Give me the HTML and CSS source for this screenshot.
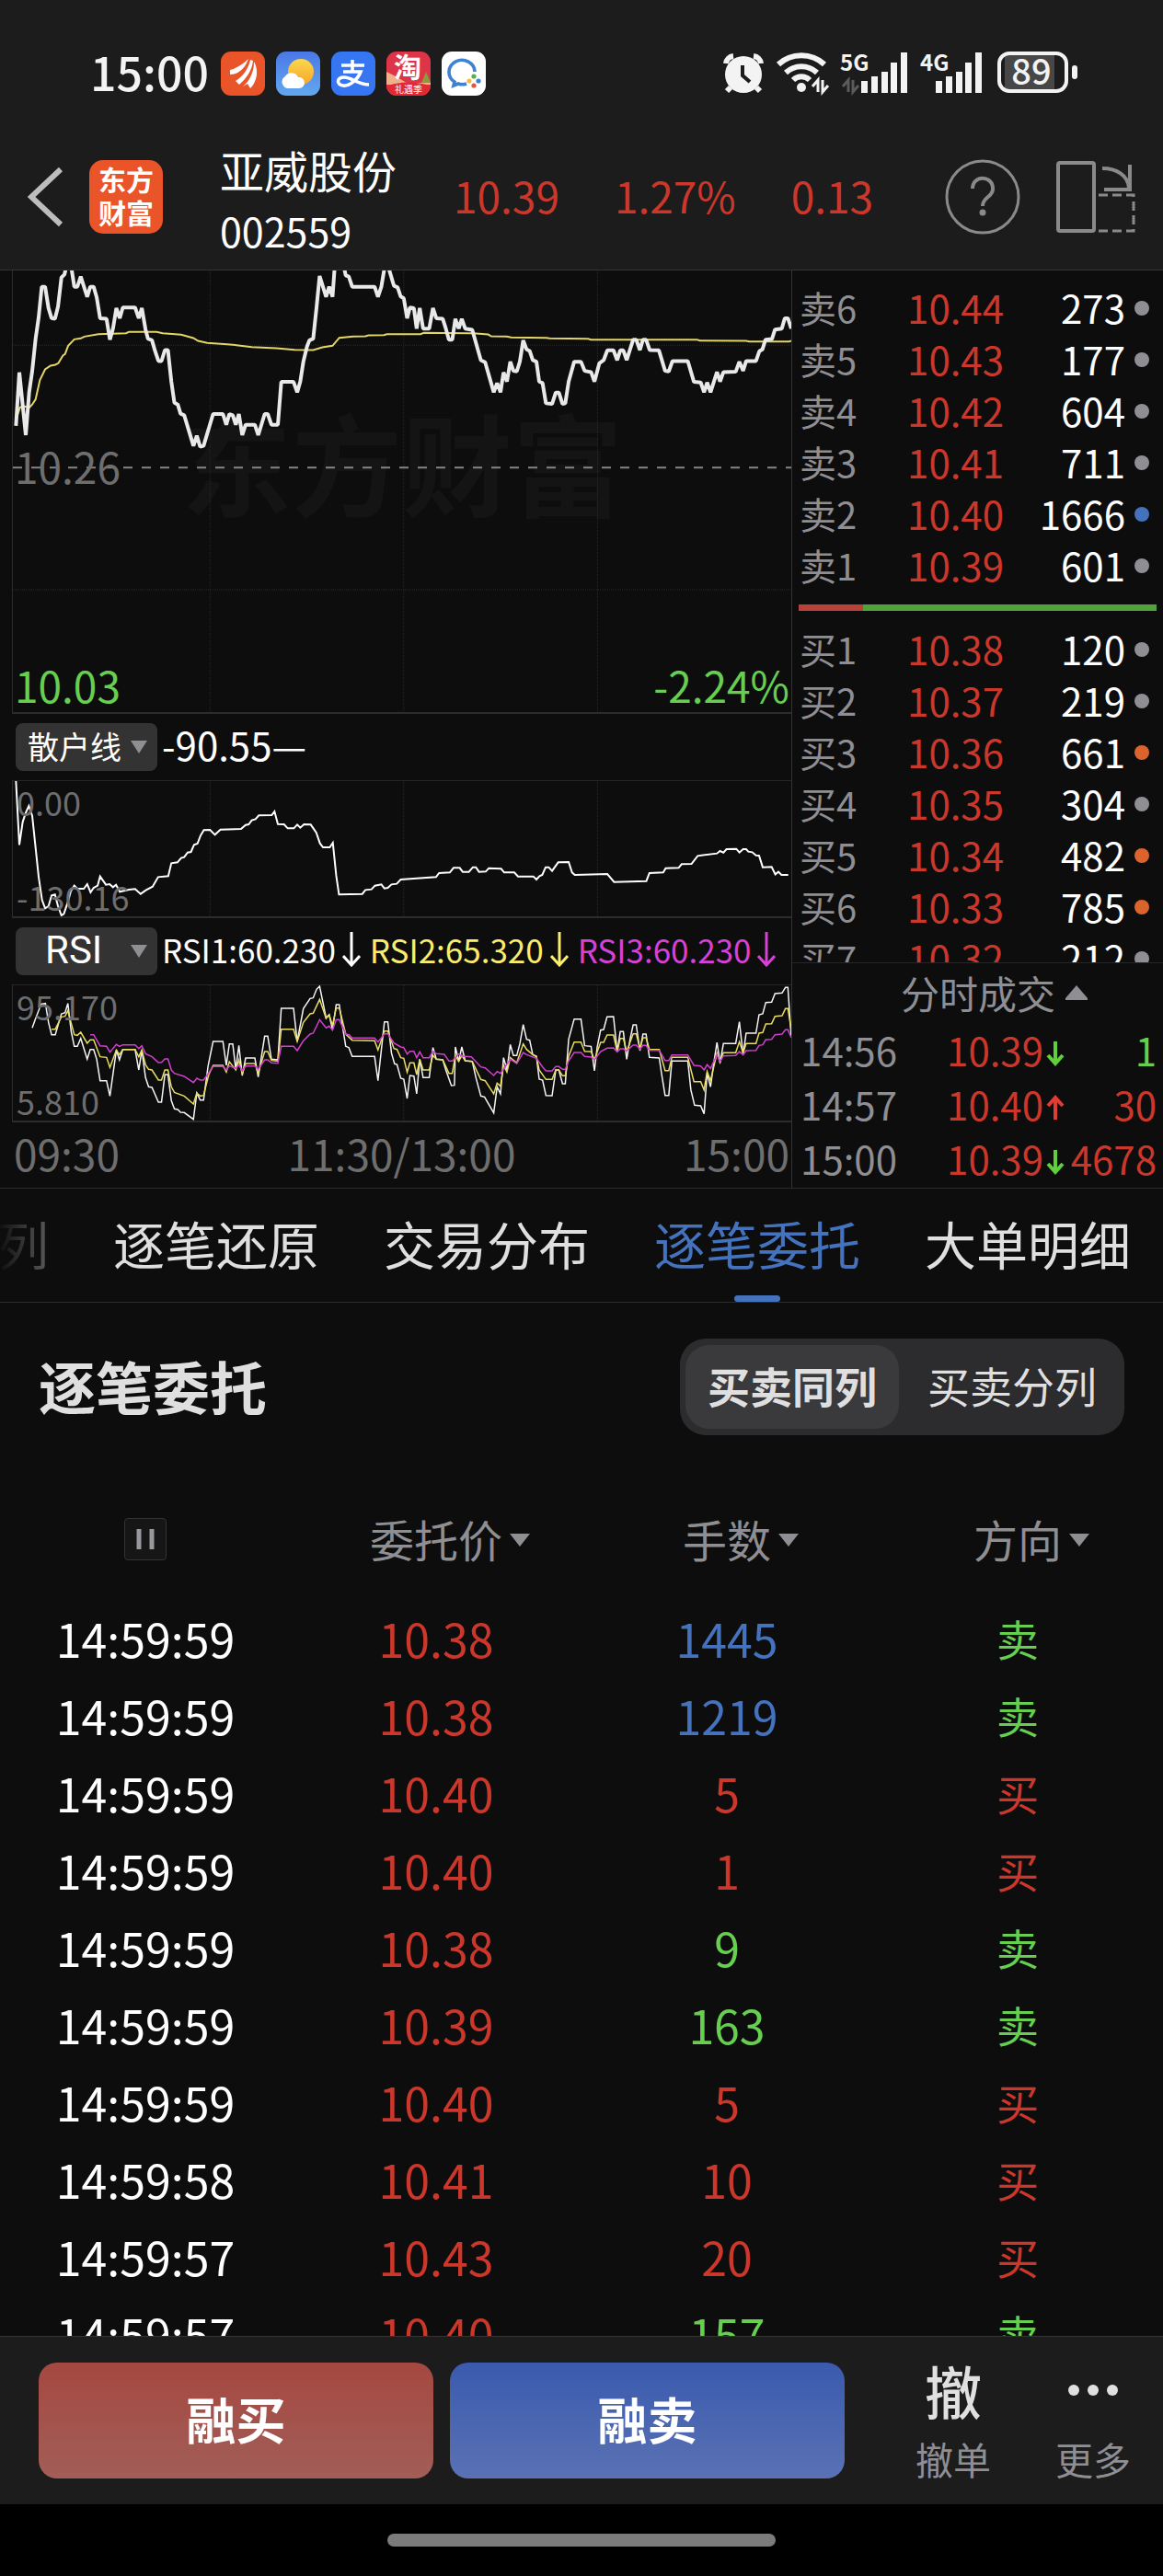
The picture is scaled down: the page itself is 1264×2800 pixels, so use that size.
FILE: index.html
```html
<!DOCTYPE html>
<html lang="zh-CN">
  <head>
    <meta charset="UTF-8" />
    <meta name="viewport" content="width=device-width, initial-scale=1.0" />
    <title>亚威股份 002559</title>
    <link rel="stylesheet" href="styles.css">
  </head>
  <body>
    <div class="app">
      <header class="top">
        <div class="status">
          <span class="clock">15:00</span>
          <div class="status-apps">
            <svg width="48" height="48" viewBox="0 0 48 48">
              <rect width="48" height="48" rx="11" fill="#ea5429"/>
              <path d="M10 25V20C18 18 25 13 30 8C27 17 20 25 10 25ZM16 32C24 27 30 19 32 9L35 10C34 21 27 30 20 36ZM24 38C32 31 36 22 36 11C41 19 40 32 32 40L29 35Z" fill="#fff"/>
            </svg>
            <svg width="48" height="48" viewBox="0 0 48 48">
              <defs>
                <linearGradient id="sky" x2="0" y2="1"><stop stop-color="#4a78e8"/><stop offset="1" stop-color="#62a8ee"/></linearGradient>
                <linearGradient id="sun" x2="0" y2="1"><stop stop-color="#fbd84a"/><stop offset="1" stop-color="#f6a52c"/></linearGradient>
              </defs>
              <rect width="48" height="48" rx="11" fill="url(#sky)"/>
              <circle cx="27" cy="22" r="14" fill="url(#sun)"/>
              <path d="M14 40a7 7 0 0 1-4-13a8 8 0 0 1 14 1a6 6 0 0 1 7 6a6 6 0 0 1-6 6Z" fill="#fff"/>
            </svg>
            <svg width="48" height="48" viewBox="0 0 48 48">
              <rect width="48" height="48" rx="11" fill="#3676f2"/>
              <path d="M11 15H36M23 9V22M13 22H32C29 30 20 38 13 37C5 36 6 28 14 28C22 28 30 36 41 36" fill="none" stroke="#fff" stroke-width="3.6"/>
            </svg>
            <svg width="48" height="48" viewBox="0 0 48 48">
              <defs><clipPath id="tb"><rect width="48" height="48" rx="11"/></clipPath></defs>
              <g clip-path="url(#tb)">
                <rect width="48" height="48" fill="#dd3547"/>
                <path d="M0 22L8 26L22 34H48V36H0Z" fill="#efb08c"/>
                <path d="M38 34L43 22L48 34Z" fill="#8f9a3c"/>
                <path d="M0 38C12 32 36 32 48 38V48H0Z" fill="#e22a35"/>
              </g>
              <text class="tb-main" x="23" y="28" text-anchor="middle">淘</text>
              <text class="tb-sub" x="24" y="45" text-anchor="middle">礼遇季</text>
            </svg>
            <svg width="48" height="48" viewBox="0 0 48 48">
              <rect width="48" height="48" rx="11" fill="#fff"/>
              <path d="M36 22A14 13 0 1 0 14 33L13 37L18 35C21 36 24 36 27 35" fill="none" stroke="#3f82d2" stroke-width="3.6"/>
              <circle cx="35" cy="27" r="2.6" fill="#58b347"/><circle cx="40" cy="32" r="2.6" fill="#3f82d2"/>
              <circle cx="35" cy="37" r="2.6" fill="#e2583a"/><circle cx="30" cy="32" r="2.6" fill="#f2bd3f"/>
            </svg>
          </div>
          <div class="status-sys">
            <svg width="46" height="48" viewBox="0 0 46 48">
              <circle cx="23" cy="25" r="20" fill="#f3f3f3"/>
              <path d="M4 13A9 9 0 0 1 12 5M42 13A9 9 0 0 0 34 5M9 39L5 43M37 39L41 43" stroke="#f3f3f3" stroke-width="6" fill="none"/>
              <path d="M22 15V26L30 33" stroke="#1c1c1c" stroke-width="4" fill="none"/>
            </svg>
            <svg width="60" height="48" viewBox="0 0 60 48">
              <path d="M4 14C18 1 40 1 54 14M12 23C22 14 36 14 46 23M20 31C25 26 33 26 38 31" fill="none" stroke="#f3f3f3" stroke-width="6"/>
              <circle cx="29" cy="39" r="5" fill="#f3f3f3"/>
              <path d="M41 38L47 31V44M58 37L52 44V31" fill="none" stroke="#f3f3f3" stroke-width="3"/>
            </svg>
            <svg width="76" height="48" viewBox="0 0 76 48">
              <text class="net" x="0" y="21">5G</text>
              <path d="M3 38L9 31V44M20 37L14 44V31" fill="none" stroke="#5a5a5a" stroke-width="3"/>
              <path d="M26.500 32V45M37.500 27V45M48.500 22V45M58.500 12V45M69.500 1V45" stroke="#f3f3f3" stroke-width="7"/>
            </svg>
            <svg width="71" height="48" viewBox="0 0 71 48">
              <text class="net" x="0" y="21">4G</text>
              <path d="M20.500 32V45M31.500 27V45M42.500 22V45M52.500 12V45M63.500 1V45" stroke="#f3f3f3" stroke-width="7"/>
            </svg>
            <svg width="90" height="48" viewBox="0 0 90 48">
              <path d="M10 3H64V42H10Z" fill="#474747"/>
              <rect x="4" y="2" width="73" height="41" rx="11" fill="none" stroke="#f3f3f3" stroke-width="4"/>
              <rect x="83" y="15" width="6" height="15" rx="3" fill="#f3f3f3"/>
              <text class="batt" x="39" y="36" text-anchor="middle">89</text>
            </svg>
          </div>
        </div>
        <div class="titlebar">
          <button class="icon-btn back" aria-label="返回">
            <svg width="40" height="68" viewBox="0 0 40 68"><path d="M36 4L4 34L36 64" fill="none" stroke="#bdbdbd" stroke-width="6"/></svg>
          </button>
          <div class="logo"><span>东方</span><span>财富</span></div>
          <div class="stock">
            <h1>亚威股份</h1>
            <p>002559</p>
          </div>
          <div class="quote">
            <span>10.39</span>
            <span>1.27%</span>
            <span>0.13</span>
          </div>
          <button class="icon-btn" aria-label="帮助">
            <svg width="84" height="84" viewBox="0 0 84 84" fill="none" stroke="#8a8a8a">
              <circle cx="42" cy="42" r="39" stroke-width="3"/>
              <path d="M31 33C31 18 54 18 53 34C52 43 42 42 42 52" stroke-width="4"/>
              <circle cx="42" cy="59" r="3.500" fill="#8a8a8a" stroke="none"/>
            </svg>
          </button>
          <button class="icon-btn rotate" aria-label="横屏">
            <svg width="86" height="80" viewBox="0 0 86 80" fill="none" stroke="#8a8a8a" stroke-width="4">
              <rect x="2" y="3" width="39" height="74" rx="2"/>
              <path d="M50 9C66 9 78 17 79 30M80 5V32M52 32H82"/>
              <path d="M46 38H84V77H46" stroke-width="3" stroke-dasharray="10 5"/>
            </svg>
          </button>
        </div>
      </header>

      <main class="market">
        <section class="charts">
          <div class="chart chart-price">
            <span class="watermark">东方财富</span>
            <svg viewBox="42 42 2535 1443" preserveAspectRatio="none">
              <path class="grid" d="M684 42V1485M1315 42V1485M1946 42V1485M42 286H2577M42 1085H2577"/>
              <path class="mid" d="M42 686H2577"/>
              <polyline class="avg" points="52,530 65,490 75,485 95,490 105,480 116,463 130,400 147,365 165,353 180,350 190,345 205,320 212,315 222,288 242,267 263,264 275,258 320,250 410,247 420,243 510,243 530,247 590,252 630,263 645,272 675,279 740,283 770,286 820,292 900,296 960,301 1020,302 1050,293 1083,288 1105,262 1150,258 1190,257 1200,254 1250,253 1260,250 1370,250 1380,246 1540,247 1590,251 1600,257 1650,258 1665,261 1780,262 1790,264 1915,265 1925,268 2270,268 2280,271 2430,272 2440,274 2570,274 2577,272"/>
              <polyline class="price" points="52,550 63,375 84,580 95,440 105,370 116,265 126,195 136,95 147,95 158,165 168,198 179,200 189,160 200,65 210,55 216,30 232,30 242,95 252,95 263,62 284,128 294,95 305,95 315,130 326,198 347,200 358,268 368,232 379,165 390,198 400,163 440,163 452,198 462,165 474,235 482,265 495,270 505,305 516,338 526,338 537,302 547,302 558,405 568,474 579,480 588,510 600,515 630,615 641,582 652,618 663,615 694,511 726,511 737,546 747,511 758,515 768,546 778,511 789,580 800,546 830,546 841,580 862,511 872,511 884,546 905,546 916,406 956,406 968,440 978,405 988,340 1000,290 1008,270 1020,265 1031,162 1041,60 1062,128 1072,95 1083,128 1090,30 1120,30 1126,58 1136,62 1147,95 1220,95 1231,128 1242,95 1252,35 1266,35 1283,92 1295,97 1305,127 1315,133 1326,198 1335,163 1348,165 1357,232 1367,165 1378,232 1398,232 1410,165 1421,198 1442,200 1452,232 1462,268 1473,268 1483,200 1494,232 1504,200 1515,232 1538,236 1566,335 1580,342 1608,440 1619,410 1630,440 1640,375 1651,405 1662,340 1672,370 1683,372 1693,340 1704,270 1715,300 1725,305 1735,335 1747,340 1756,405 1767,410 1778,476 1798,478 1810,441 1820,441 1832,478 1841,476 1852,405 1870,340 1892,340 1904,370 1925,374 1936,405 1952,345 1966,335 1978,303 1998,303 2010,335 2020,303 2030,303 2041,335 2062,268 2072,268 2084,302 2094,268 2104,268 2116,302 2146,303 2166,370 2178,372 2190,338 2240,338 2260,406 2282,408 2293,440 2303,408 2314,440 2335,374 2345,405 2356,374 2396,373 2408,340 2420,370 2430,338 2462,338 2473,306 2483,300 2493,268 2514,266 2524,235 2546,232 2556,198 2566,198 2577,232"/>
            </svg>
            <span class="tag tag-mid">10.26</span>
            <span class="tag tag-low">10.03</span>
            <span class="tag tag-pct">-2.24%</span>
          </div>

          <div class="ind-bar">
            <div class="picker">
              <select aria-label="副图指标一"><option>散户线</option></select>
              <svg width="18" height="14" viewBox="0 0 18 14"><path d="M0 0H18L9 14Z" fill="#8e8e93"/></svg>
            </div>
            <span class="ind-value">-90.55—</span>
          </div>
          <div class="chart chart-sub">
            <span class="tag-s tag-top">0.00</span>
            <span class="tag-s tag-bottom">-130.16</span>
            <svg viewBox="42 232 2535 441" preserveAspectRatio="none">
              <path class="grid" d="M684 232V673M1315 232V673M1946 232V673"/>
              <polyline class="retail" points="52,232 63,440 74,365 84,335 94,313 105,345 126,545 137,620 147,647 158,640 168,605 179,602 189,640 200,670 208,665 220,630 231,590 242,573 252,583 273,583 284,568 295,595 305,580 318,573 326,543 345,570 357,568 368,578 378,570 390,593 420,586 440,584 458,600 475,588 497,576 515,545 548,542 558,500 578,497 590,483 600,480 611,465 622,463 632,440 643,436 653,410 664,392 684,391 700,407 718,390 785,388 800,375 810,373 820,360 832,356 843,344 885,343 894,331 905,372 925,373 937,386 957,386 968,374 978,384 990,373 1012,374 1030,400 1042,435 1052,448 1074,448 1084,433 1095,540 1104,602 1180,600 1190,587 1210,585 1221,573 1242,569 1252,582 1263,580 1275,569 1292,567 1305,553 1420,545 1430,532 1465,530 1477,515 1497,515 1507,528 1527,528 1540,513 1550,513 1560,528 1582,527 1592,516 1632,518 1642,530 1675,530 1687,543 1737,543 1747,553 1757,542 1766,538 1777,513 1787,513 1798,525 1818,497 1852,496 1863,530 1872,538 1978,535 2000,561 2105,558 2115,532 2160,530 2168,516 2210,515 2220,503 2252,502 2272,476 2335,468 2345,460 2356,465 2366,454 2398,453 2408,465 2420,454 2430,454 2437,462 2450,464 2462,474 2472,475 2484,513 2513,512 2525,536 2535,528 2545,538 2567,538"/>
            </svg>
          </div>

          <div class="ind-bar">
            <div class="picker">
              <select class="wide" aria-label="副图指标二"><option>RSI</option></select>
              <svg width="18" height="14" viewBox="0 0 18 14"><path d="M0 0H18L9 14Z" fill="#8e8e93"/></svg>
            </div>
            <div class="rsi">
              <span class="rsi1">RSI1:60.230 <svg width="20" height="38" viewBox="0 0 20 38"><path d="M10 0V36M1 26L10 36L19 26"/></svg></span>
              <span class="rsi2">RSI2:65.320 <svg width="20" height="38" viewBox="0 0 20 38"><path d="M10 0V36M1 26L10 36L19 26"/></svg></span>
              <span class="rsi3">RSI3:60.230 <svg width="20" height="38" viewBox="0 0 20 38"><path d="M10 0V36M1 26L10 36L19 26"/></svg></span>
            </div>
          </div>
          <div class="chart chart-sub">
            <span class="tag-s tag-top">95.170</span>
            <span class="tag-s tag-bottom">5.810</span>
            <svg viewBox="42 889 2535 441" preserveAspectRatio="none">
              <path class="grid" d="M684 889V1330M1315 889V1330M1946 889V1330"/>
              <polyline class="line1" points="105,1028 115,1000 134,950 148,948 158,1010 168,1050 180,1050 200,982 212,978 221,948 232,1040 242,1088 252,1088 263,1062 284,1130 294,1098 305,1098 315,1130 326,1200 347,1200 358,1250 379,1100 389,1132 400,1098 440,1098 452,1165 462,1100 474,1190 484,1220 495,1222 516,1270 526,1270 537,1180 547,1180 558,1265 568,1292 579,1294 588,1303 600,1304 630,1326 641,1240 652,1263 663,1263 678,1150 694,1072 726,1072 737,1150 747,1080 758,1080 768,1163 778,1085 789,1183 800,1126 830,1126 841,1188 862,1055 872,1055 884,1130 905,1132 916,964 956,964 968,1072 988,965 1010,932 1020,930 1031,902 1041,892 1062,995 1072,985 1083,1033 1095,952 1105,952 1115,1020 1126,1088 1136,1092 1147,1121 1220,1121 1231,1200 1252,1008 1263,1008 1275,1110 1285,1145 1293,1147 1305,1192 1315,1195 1326,1258 1335,1183 1348,1185 1357,1243 1367,1130 1378,1190 1398,1190 1410,1092 1421,1130 1442,1132 1452,1165 1470,1216 1480,1215 1483,1090 1494,1137 1504,1090 1515,1135 1538,1137 1550,1190 1566,1250 1578,1253 1608,1305 1619,1220 1630,1243 1640,1125 1651,1165 1662,1082 1672,1118 1683,1118 1693,1080 1704,1017 1715,1065 1725,1068 1735,1115 1747,1120 1756,1195 1767,1198 1778,1248 1798,1249 1810,1165 1820,1165 1832,1210 1841,1210 1852,1065 1870,999 1892,999 1904,1086 1925,1088 1936,1168 1945,1090 1956,1035 1966,1033 1977,992 1998,991 2010,1105 2020,1040 2030,1040 2041,1130 2052,1065 2062,1018 2072,1018 2084,1102 2094,1048 2104,1048 2115,1124 2147,1126 2155,1180 2166,1248 2178,1248 2188,1136 2240,1136 2250,1230 2262,1280 2282,1282 2293,1308 2303,1175 2314,1220 2325,1140 2335,1075 2345,1142 2356,1079 2396,1079 2408,1008 2420,1115 2430,1045 2462,1045 2472,985 2484,982 2494,945 2513,944 2524,916 2547,914 2558,896 2566,896 2577,1060"/>
              <polyline class="line2" points="168,1032 180,1032 200,992 212,990 221,972 242,1050 252,1052 263,1042 284,1078 294,1067 305,1067 326,1122 347,1124 358,1157 379,1100 389,1115 400,1098 440,1098 452,1122 462,1100 474,1148 484,1163 495,1165 516,1198 526,1198 537,1165 547,1165 558,1220 568,1238 600,1250 630,1276 641,1240 652,1250 663,1248 680,1180 694,1150 726,1150 737,1172 747,1138 768,1165 778,1132 789,1178 800,1144 830,1144 841,1175 862,1105 872,1105 884,1134 905,1136 916,1032 956,1032 968,1072 988,1010 1010,982 1020,980 1041,935 1062,997 1072,985 1083,1020 1095,963 1105,963 1126,1048 1147,1068 1220,1070 1231,1100 1252,1038 1263,1038 1283,1095 1293,1098 1305,1125 1315,1127 1326,1172 1335,1142 1348,1142 1357,1180 1367,1130 1378,1165 1398,1165 1410,1118 1421,1130 1442,1132 1462,1176 1473,1176 1483,1118 1494,1137 1504,1118 1515,1135 1538,1137 1566,1196 1580,1200 1608,1243 1619,1208 1630,1218 1640,1150 1651,1172 1662,1125 1683,1142 1704,1080 1715,1098 1735,1115 1747,1122 1756,1165 1778,1196 1798,1196 1810,1165 1820,1165 1832,1184 1841,1184 1852,1120 1870,1074 1892,1074 1904,1104 1925,1105 1936,1132 1956,1075 1966,1075 1977,1051 1998,1051 2010,1105 2020,1062 2030,1062 2041,1105 2062,1047 2072,1047 2084,1095 2094,1060 2104,1060 2115,1098 2147,1098 2166,1167 2178,1167 2188,1124 2240,1124 2260,1203 2282,1203 2293,1230 2303,1170 2314,1200 2335,1110 2345,1140 2356,1109 2396,1109 2408,1073 2420,1110 2430,1079 2462,1079 2472,1045 2484,1043 2494,1015 2513,1014 2524,990 2547,988 2558,965 2566,965 2577,1035"/>
              <polyline class="line3" points="294,1050 305,1050 326,1086 347,1088 358,1107 379,1082 389,1088 400,1083 440,1083 452,1095 462,1086 474,1112 495,1122 516,1141 526,1140 537,1129 547,1129 558,1165 568,1176 600,1186 630,1206 641,1192 652,1198 663,1198 694,1154 726,1154 737,1165 747,1152 768,1160 778,1148 789,1168 800,1152 830,1152 841,1162 862,1132 872,1132 884,1142 905,1143 916,1088 956,1088 968,1102 988,1070 1010,1048 1020,1045 1041,1001 1062,1028 1072,1022 1083,1035 1095,1001 1105,1001 1126,1048 1137,1050 1147,1061 1220,1061 1231,1074 1252,1047 1263,1047 1283,1077 1305,1090 1315,1092 1326,1113 1335,1104 1348,1104 1357,1125 1367,1106 1378,1125 1398,1125 1410,1104 1421,1112 1447,1114 1462,1136 1473,1136 1494,1113 1504,1120 1535,1122 1566,1155 1580,1158 1608,1183 1619,1170 1630,1176 1662,1130 1683,1144 1704,1108 1715,1115 1747,1127 1767,1155 1778,1168 1798,1168 1810,1154 1820,1154 1832,1163 1841,1163 1852,1135 1870,1108 1892,1108 1904,1121 1925,1123 1936,1132 1956,1105 1977,1094 1998,1093 2010,1106 2020,1096 2030,1096 2041,1103 2062,1084 2072,1084 2084,1097 2094,1085 2104,1085 2115,1101 2147,1101 2166,1134 2178,1134 2188,1116 2240,1116 2260,1150 2282,1152 2293,1165 2303,1148 2314,1160 2335,1115 2345,1137 2356,1119 2396,1118 2408,1105 2420,1116 2430,1102 2462,1101 2472,1085 2484,1083 2494,1066 2513,1065 2524,1050 2547,1048 2558,1034 2566,1034 2577,1060"/>
            </svg>
          </div>
          <div class="times">
            <span>09:30</span>
            <span>11:30/13:00</span>
            <span>15:00</span>
          </div>
        </section>

        <aside class="side">
          <div class="book">
            <table class="levels">
              <tr><th>卖6</th><td>10.44</td><td>273</td><td><i class="dot"></i></td></tr>
              <tr><th>卖5</th><td>10.43</td><td>177</td><td><i class="dot"></i></td></tr>
              <tr><th>卖4</th><td>10.42</td><td>604</td><td><i class="dot"></i></td></tr>
              <tr><th>卖3</th><td>10.41</td><td>711</td><td><i class="dot"></i></td></tr>
              <tr><th>卖2</th><td>10.40</td><td>1666</td><td><i class="dot blue"></i></td></tr>
              <tr><th>卖1</th><td>10.39</td><td>601</td><td><i class="dot"></i></td></tr>
            </table>
            <div class="ratio"><div class="ratio-buy" style="width: 18%"></div></div>
            <table class="levels">
              <tr><th>买1</th><td>10.38</td><td>120</td><td><i class="dot"></i></td></tr>
              <tr><th>买2</th><td>10.37</td><td>219</td><td><i class="dot"></i></td></tr>
              <tr><th>买3</th><td>10.36</td><td>661</td><td><i class="dot orange"></i></td></tr>
              <tr><th>买4</th><td>10.35</td><td>304</td><td><i class="dot"></i></td></tr>
              <tr><th>买5</th><td>10.34</td><td>482</td><td><i class="dot orange"></i></td></tr>
              <tr><th>买6</th><td>10.33</td><td>785</td><td><i class="dot orange"></i></td></tr>
              <tr><th>买7</th><td>10.32</td><td>212</td><td><i class="dot"></i></td></tr>
            </table>
          </div>
          <div class="deals">
            <button class="deals-title">分时成交
              <svg width="24" height="16" viewBox="0 0 24 16"><path d="M12 0L24 14V16H0V14Z" fill="#8e8e93"/></svg>
            </button>
            <table class="deal-list">
              <tr><th>14:56</th><td>10.39<svg class="down" width="20" height="28" viewBox="0 0 20 28"><path d="M10 1V25M2 16L10 25L18 16"/></svg></td><td class="green">1</td></tr>
              <tr><th>14:57</th><td>10.40<svg class="up" width="20" height="28" viewBox="0 0 20 28"><path d="M10 27V3M2 12L10 3L18 12"/></svg></td><td>30</td></tr>
              <tr><th>15:00</th><td>10.39<svg class="down" width="20" height="28" viewBox="0 0 20 28"><path d="M10 1V25M2 16L10 25L18 16"/></svg></td><td>4678</td></tr>
            </table>
          </div>
        </aside>
      </main>

      <nav class="tabs">
        <button class="faded">列</button>
        <button>逐笔还原</button>
        <button>交易分布</button>
        <button class="active">逐笔委托</button>
        <button>大单明细</button>
      </nav>

      <section class="orders">
        <div class="orders-head">
          <h2>逐笔委托</h2>
          <div class="switch">
            <button class="on">买卖同列</button>
            <button>买卖分列</button>
          </div>
        </div>
        <table class="order-list">
          <thead>
            <tr>
              <th>
                <button class="pause" aria-label="暂停"><svg width="20" height="22" viewBox="0 0 20 22"><path d="M3 0V22M17 0V22" stroke="#98989d" stroke-width="5"/></svg></button>
              </th>
              <th><button class="sort">委托价<svg width="22" height="14" viewBox="0 0 22 14"><path d="M0 0H22L11 14Z"/></svg></button></th>
              <th><button class="sort">手数<svg width="22" height="14" viewBox="0 0 22 14"><path d="M0 0H22L11 14Z"/></svg></button></th>
              <th><button class="sort">方向<svg width="22" height="14" viewBox="0 0 22 14"><path d="M0 0H22L11 14Z"/></svg></button></th>
            </tr>
          </thead>
          <tbody>
            <tr><td>14:59:59</td><td class="red">10.38</td><td class="big">1445</td><td class="green">卖</td></tr>
            <tr><td>14:59:59</td><td class="red">10.38</td><td class="big">1219</td><td class="green">卖</td></tr>
            <tr><td>14:59:59</td><td class="red">10.40</td><td class="red">5</td><td class="red">买</td></tr>
            <tr><td>14:59:59</td><td class="red">10.40</td><td class="red">1</td><td class="red">买</td></tr>
            <tr><td>14:59:59</td><td class="red">10.38</td><td class="green">9</td><td class="green">卖</td></tr>
            <tr><td>14:59:59</td><td class="red">10.39</td><td class="green">163</td><td class="green">卖</td></tr>
            <tr><td>14:59:59</td><td class="red">10.40</td><td class="red">5</td><td class="red">买</td></tr>
            <tr><td>14:59:58</td><td class="red">10.41</td><td class="red">10</td><td class="red">买</td></tr>
            <tr><td>14:59:57</td><td class="red">10.43</td><td class="red">20</td><td class="red">买</td></tr>
            <tr><td>14:59:57</td><td class="red">10.40</td><td class="green">157</td><td class="green">卖</td></tr>
          </tbody>
        </table>
      </section>

      <footer class="actions">
        <button class="trade buy">融买</button>
        <button class="trade sell">融卖</button>
        <button class="tool"><span class="tool-icon">撤</span><span>撤单</span></button>
        <button class="tool">
          <span class="tool-icon"><svg width="56" height="14" viewBox="0 0 56 14" fill="#e0e0e0"><circle cx="7" cy="7" r="6"/><circle cx="28" cy="7" r="6"/><circle cx="49" cy="7" r="6"/></svg></span>
          <span>更多</span>
        </button>
      </footer>
      <div class="home"><div class="home-bar"></div></div>
    </div>
  </body>
</html>
```
FILE: styles.css
```css
* {
  box-sizing: border-box;
}

body {
  margin: 0;
  background-color: #0d0d0d;
  color: #fff;
  font-family: "Noto Sans CJK SC", "Noto Sans", sans-serif;
}

h1, h2, p {
  margin: 0;
  font-weight: 400;
}

button, select {
  margin: 0;
  padding: 0;
  border: 0;
  background: none;
  color: inherit;
  font: inherit;
  cursor: pointer;
}

svg {
  display: block;
  flex: none;
}

table {
  width: 100%;
  border-collapse: collapse;
  table-layout: fixed;
}

th, td {
  padding: 0;
  font-weight: 400;
}

.app {
  display: flex;
  flex-direction: column;
  height: 100vh;
  overflow: hidden;
}

/* header */
.top {
  flex: none;
  background-color: #1c1c1c;
  border-bottom: 1px solid #343434;
}

.status {
  display: flex;
  align-items: center;
  height: 146px;
  padding: 14px 92px 0 98px;
}

.clock {
  width: 142px;
  color: #f3f3f3;
  font-size: 50px;
  font-weight: 500;
  line-height: 50px;
  padding-bottom: 6px;
}

.status-apps {
  display: flex;
  gap: 12px;
}

.status-sys {
  display: flex;
  gap: 11px;
  margin-left: auto;
}

.status svg {
  overflow: visible;
}

.tb-main {
  fill: #fff;
  font-size: 30px;
  font-weight: 700;
}

.tb-sub {
  fill: #fff;
  font-size: 10px;
}

.net {
  fill: #f3f3f3;
  font-size: 24px;
  font-weight: 700;
}

.batt {
  fill: #f3f3f3;
  font-size: 38px;
  font-weight: 500;
}

.titlebar {
  display: flex;
  align-items: center;
  height: 147px;
  padding: 0 30px 11px 30px;
}

.icon-btn {
  flex: none;
}

.back {
  margin-right: 27px;
}

.logo {
  display: flex;
  flex-direction: column;
  justify-content: center;
  align-items: center;
  width: 80px;
  height: 80px;
  padding-bottom: 4px;
  border-radius: 15px;
  background-color: #ea5429;
  font-size: 30px;
  font-weight: 700;
  line-height: 36px;
}

.stock {
  width: 254px;
  margin-left: 62px;
  padding-top: 6px;
}

.stock h1 {
  font-size: 48px;
  line-height: 66px;
}

.stock p {
  font-size: 43px;
  line-height: 66px;
}

.quote {
  display: flex;
  flex: 1;
  gap: 60px;
  color: #cb372a;
  font-size: 46px;
  line-height: 60px;
  padding-bottom: 4px;
}

.rotate {
  margin-left: 38px;
}

/* charts and order book */
.market {
  display: flex;
  flex: none;
  height: 998px;
  border-bottom: 1px solid #2c2c2c;
}

.charts {
  display: flex;
  flex-direction: column;
  flex: 1;
  min-width: 0;
  padding-left: 13px;
  border-right: 1px solid #333;
}

.chart {
  position: relative;
  border-left: 1px solid #2c2c2c;
  border-bottom: 2px solid #2c2c2c;
}

.chart svg {
  width: 100%;
  height: 100%;
}

.chart path, .chart polyline {
  fill: none;
  vector-effect: non-scaling-stroke;
}

.chart-price {
  flex: 1;
  min-height: 0;
}

.chart-sub {
  flex: none;
  height: 150px;
  border-top: 1px solid #262626;
}

.chart .grid {
  stroke: #2b2b2b;
  stroke-width: 1;
  stroke-dasharray: 1 1;
}

.chart .mid {
  stroke: #858585;
  stroke-width: 2;
  stroke-dasharray: 10 10;
}

.price {
  stroke: #e9e9e9;
  stroke-width: 4;
  stroke-linejoin: bevel;
}

.avg {
  stroke: #e3d566;
  stroke-width: 2;
}

.retail {
  stroke: #fff;
  stroke-width: 2;
}

.line1, .line2, .line3 {
  stroke-width: 1.5;
}

.line1 {
  stroke: #f5f5f5;
}

.line2 {
  stroke: #e8dc62;
}

.line3 {
  stroke: #d03fd0;
}

.watermark {
  position: absolute;
  top: 120px;
  left: 0;
  right: 0;
  z-index: -1;
  color: #141414;
  font-size: 120px;
  font-weight: 700;
  line-height: 174px;
  text-align: center;
}

.tag {
  position: absolute;
  left: 2px;
  font-size: 46px;
  line-height: 60px;
}

.tag-mid {
  top: 182px;
  color: #6e6e6e;
}

.tag-low {
  bottom: 0;
  color: #67cf50;
}

.tag-pct {
  left: auto;
  right: 2px;
  bottom: 0;
  color: #67cf50;
}

.tag-s {
  position: absolute;
  left: 4px;
  color: #6e6e6e;
  font-size: 36px;
  line-height: 44px;
}

.tag-top {
  top: 0;
}

.tag-bottom {
  bottom: 0;
}

.ind-bar {
  display: flex;
  flex: none;
  align-items: center;
  height: 72px;
  padding-left: 4px;
  gap: 5px;
}

.picker {
  position: relative;
  width: 154px;
  height: 52px;
  border-radius: 8px;
  background-color: #333;
}

.picker select {
  width: 100%;
  height: 52px;
  padding: 0 40px 4px 13px;
  appearance: none;
  font-size: 34px;
}

.picker .wide {
  padding-left: 32px;
  font-family: Roboto, sans-serif;
  font-size: 42px;
}

.picker svg {
  position: absolute;
  top: 19px;
  right: 11px;
  pointer-events: none;
}

.ind-value {
  padding-bottom: 6px;
  font-size: 42px;
  line-height: 52px;
}

.rsi {
  display: flex;
  gap: 10px;
  font-size: 35px;
  line-height: 52px;
  padding-bottom: 4px;
}

.rsi span {
  display: flex;
  align-items: center;
  gap: 7px;
}

.rsi path {
  fill: none;
  stroke: currentColor;
  stroke-width: 3;
}

.rsi2 {
  color: #faec6c;
}

.rsi3 {
  color: #d741d7;
}

.times {
  display: flex;
  flex: none;
  justify-content: space-between;
  height: 71px;
  padding: 0 2px;
  color: #6e6e6e;
  font-size: 46px;
  line-height: 66px;
}

.side {
  display: flex;
  flex-direction: column;
  width: 403px;
}

.book {
  flex: 1;
  min-height: 0;
  overflow: hidden;
  padding: 12px 15px 0 8px;
}

.levels {
  font-size: 42px;
}

.levels tr {
  height: 56px;
}

.levels th, .levels td {
  height: 56px;
  line-height: 56px;
}

.levels th {
  width: 104px;
  color: #8e8e93;
  font-size: 40px;
  text-align: left;
}

.levels td {
  color: #cb372a;
  text-align: right;
}

.levels td:nth-child(2) {
  width: 118px;
}

.levels td:nth-child(3) {
  color: #fff;
}

.levels td:last-child {
  width: 26px;
}

.dot {
  display: block;
  width: 16px;
  height: 16px;
  margin: 2px 0 0 10px;
  border-radius: 50%;
  background-color: #8e8e93;
}

.blue {
  background-color: #4472bd;
}

.orange {
  background-color: #db642d;
}

.ratio {
  height: 7px;
  margin: 15px -8px 13px -1px;
  background-color: #4fa33a;
}

.ratio-buy {
  height: 7px;
  background-color: #b8423a;
}

.deals {
  flex: none;
  height: 245px;
  overflow: hidden;
  border-top: 1px solid #262626;
}

.deals-title {
  display: flex;
  justify-content: center;
  align-items: center;
  gap: 11px;
  width: 100%;
  height: 64px;
  padding-left: 36px;
  color: #8e8e93;
  font-size: 42px;
  line-height: 64px;
}

.deal-list {
  color: #cb372a;
  font-size: 42px;
}

.deal-list td, .deal-list th {
  height: 59px;
  line-height: 59px;
  text-align: right;
  white-space: nowrap;
}

.deal-list th {
  width: 114px;
  color: #8e8e93;
}

.deal-list td:nth-child(2) {
  width: 182px;
}

.deal-list td:last-child {
  padding-right: 7px;
}

.deal-list svg {
  display: inline-block;
  margin-left: 3px;
  fill: none;
  stroke-width: 4;
}

.down {
  stroke: #5fd03c;
}

.up {
  stroke: #e03c34;
}

.deal-list .green, .green {
  color: #67cf50;
}

.red {
  color: #cb372a;
}

.big {
  color: #4472bd;
}

/* tabs */
.tabs {
  display: flex;
  flex: none;
  gap: 70px;
  height: 124px;
  overflow: hidden;
  border-bottom: 1px solid #2c2c2c;
  color: #dfdfdf;
  font-size: 56px;
}

.tabs button {
  position: relative;
  flex: none;
  height: 123px;
  padding-bottom: 6px;
}

.tabs .faded {
  margin-left: -3px;
  width: 56px;
  background: linear-gradient(90deg, #0d0d0d, #5a5a5a);
  background-clip: text;
  color: transparent;
}

.tabs .active {
  color: #4472bd;
}

.tabs .active::after {
  content: "";
  position: absolute;
  bottom: 0;
  left: 50%;
  width: 50px;
  height: 7px;
  margin-left: -25px;
  border-radius: 4px;
  background-color: #4472bd;
}

/* order list */
.orders {
  flex: 1;
  min-height: 0;
  overflow: hidden;
}

.orders-head {
  display: flex;
  justify-content: space-between;
  align-items: center;
  padding: 39px 42px 0;
}

.orders-head h2 {
  padding-bottom: 4px;
  color: #dfdfdf;
  font-size: 62px;
  font-weight: 700;
  line-height: 90px;
}

.switch {
  display: flex;
  padding: 7px 6px;
  border-radius: 28px;
  background-color: #2c2c2e;
}

.switch button {
  height: 91px;
  padding: 0 24px 5px;
  border-radius: 26px;
  color: #dfdfdf;
  font-size: 46px;
}

.switch .on {
  margin-right: 7px;
  background-color: #3a3a3c;
  font-weight: 700;
}

.order-list {
  margin-top: 66px;
  font-size: 50px;
  text-align: center;
}

.order-list th {
  height: 112px;
  padding-bottom: 18px;
}

.order-list td {
  height: 84px;
  line-height: 84px;
}

.order-list td:last-child {
  font-size: 46px;
}

.sort {
  display: inline-flex;
  align-items: center;
  color: #8e8e93;
  font-size: 48px;
  line-height: 64px;
  padding-bottom: 8px;
}

.sort svg {
  margin: 4px -30px 0 8px;
  fill: #8e8e93;
}

.pause {
  display: flex;
  justify-content: center;
  align-items: center;
  width: 46px;
  height: 46px;
  margin: 0 auto;
  border: 1px solid #333;
  border-radius: 4px;
  background-color: #161616;
}

/* bottom bar */
.actions {
  display: flex;
  flex: none;
  height: 183px;
  padding: 28px 0 28px 42px;
  border-top: 1px solid #343434;
  background-color: #1c1c1c;
}

.trade {
  flex: 1;
  height: 126px;
  margin-right: 18px;
  padding-bottom: 6px;
  border-radius: 20px;
  font-size: 54px;
  font-weight: 700;
}

.buy {
  background: linear-gradient(#a44840, #a25e58);
}

.sell {
  margin-right: 42px;
  background: linear-gradient(#3a5aae, #5a72b4);
}

.tool {
  display: flex;
  flex: none;
  flex-direction: column;
  align-items: center;
  width: 152px;
  color: #8e8e93;
  font-size: 41px;
  line-height: 60px;
}

.tool-icon {
  display: flex;
  flex: none;
  align-items: center;
  height: 74px;
  padding-bottom: 14px;
  color: #e0e0e0;
  font-size: 62px;
  font-weight: 500;
}

.home {
  flex: none;
  height: 78px;
  padding-top: 32px;
  background-color: #000;
}

.home-bar {
  width: 422px;
  height: 14px;
  margin: 0 auto;
  border-radius: 7px;
  background-color: #7b7b7b;
}
```
